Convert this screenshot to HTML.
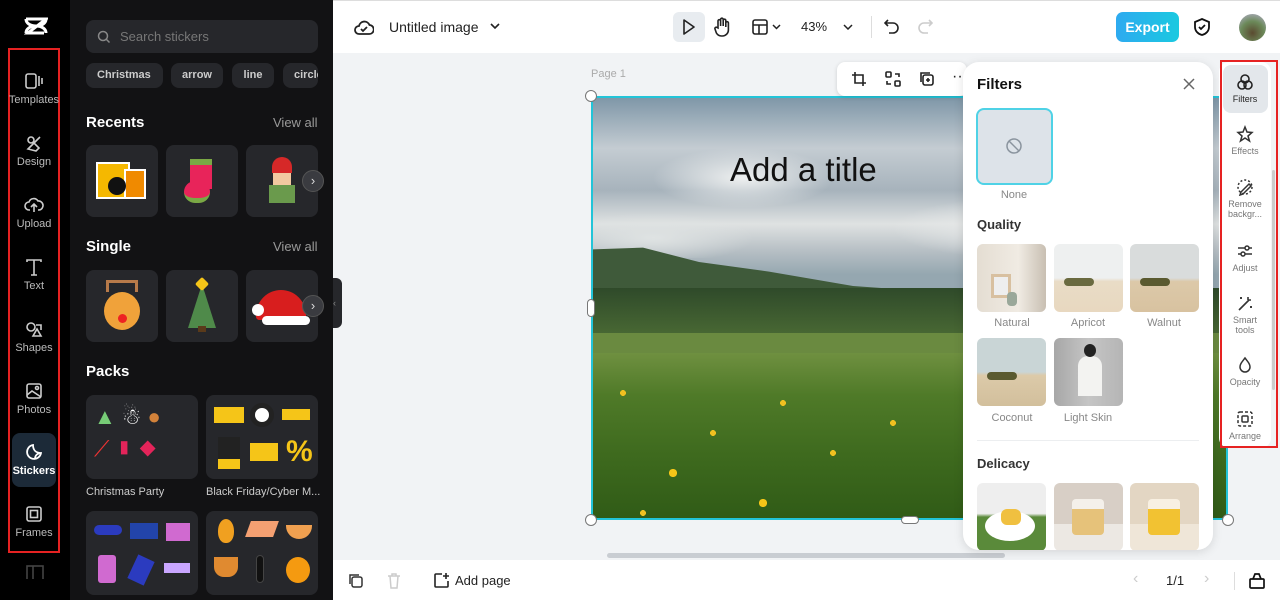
<!DOCTYPE html>
<html><head><meta charset="utf-8"><style>
*{box-sizing:border-box;margin:0;padding:0}
body{width:1280px;height:600px;overflow:hidden;position:relative;font-family:"Liberation Sans",sans-serif;background:#f1f3f5}
.a{position:absolute}
.rail{left:0;top:0;width:70px;height:600px;background:#000}
.ri{position:absolute;left:8px;width:52px;text-align:center;color:#bbb;font-size:11px}
.ri svg{display:block;margin:0 auto 3px}
.panel{left:70px;top:0;width:263px;height:600px;background:#121214}
.chip{position:absolute;top:63px;height:25px;background:#26272b;border-radius:8px;color:#ccc;font-size:11px;font-weight:bold;line-height:25px;padding:0 11px}
.h{position:absolute;left:86px;color:#fff;font-weight:bold;font-size:15px}
.va{position:absolute;right:15px;color:#999;font-size:13px}
.tile{position:absolute;width:72px;height:72px;background:#26272b;border-radius:8px}
.pk{position:absolute;background:#26272b;border-radius:8px}
.lbl{position:absolute;color:#ccc;font-size:11px}
.arrow{position:absolute;width:22px;height:22px;border-radius:50%;background:#3a3b40;border:1px solid #555;color:#ddd;font-size:13px;text-align:center;line-height:20px}
.fl{position:absolute;font-size:11px;color:#888;text-align:center;width:70px}
.th{position:absolute;width:69px;height:68px;border-radius:6px}
.rr{position:absolute;left:1222px;width:46px;text-align:center;font-size:9px;color:#777;line-height:10px}
.rr svg{display:block;margin:0 auto 3px}
</style></head><body>
<!-- rail -->
<div class="a rail">
 <svg class="a" style="left:24px;top:16px" width="24" height="20" viewBox="0 0 24 20"><path d="M2 3h20L4 17h16M2 3c0 4 4 7 10 7s10-3 10-7M2 17c0-4 4-7 10-7s10 3 10 7" stroke="#fff" stroke-width="3" fill="none"/></svg>
 <div class="a" style="left:8px;top:48px;width:52px;height:505px;border:2px solid #e62222"></div>
 <div class="ri" style="top:71px"><svg width="20" height="20" viewBox="0 0 20 20" fill="none" stroke="#ccc" stroke-width="1.6"><rect x="2" y="3" width="10" height="14" rx="2"/><path d="M15 5v10M18 7v6"/></svg>Templates</div>
 <div class="ri" style="top:133px"><svg width="20" height="20" viewBox="0 0 20 20" fill="none" stroke="#ccc" stroke-width="1.6"><circle cx="7" cy="7" r="3"/><path d="M10 10l6-6M4 16l6-6 5 5-3 3z"/></svg>Design</div>
 <div class="ri" style="top:195px"><svg width="20" height="20" viewBox="0 0 20 20" fill="none" stroke="#ccc" stroke-width="1.6"><path d="M6 15H5a4 4 0 010-8 5 5 0 019-1 4 4 0 011 9h-1M10 17V9M7 12l3-3 3 3"/></svg>Upload</div>
 <div class="ri" style="top:257px"><svg width="20" height="20" viewBox="0 0 20 20" fill="none" stroke="#ccc" stroke-width="1.6"><path d="M3 5V3h14v2M10 3v15M7 18h6"/></svg>Text</div>
 <div class="ri" style="top:319px"><svg width="20" height="20" viewBox="0 0 20 20" fill="none" stroke="#ccc" stroke-width="1.6"><circle cx="7" cy="8" r="4"/><path d="M12 6h5v5M9 17l4-7 4 7z"/></svg>Shapes</div>
 <div class="ri" style="top:381px"><svg width="20" height="20" viewBox="0 0 20 20" fill="none" stroke="#ccc" stroke-width="1.6"><rect x="3" y="3" width="14" height="14" rx="2"/><path d="M3 14l5-4 9 6"/><circle cx="13" cy="7" r="1.5"/></svg>Photos</div>
 <div class="a" style="left:12px;top:433px;width:44px;height:54px;background:#1c2a38;border-radius:8px"></div>
 <div class="ri" style="top:442px;color:#fff;font-weight:bold"><svg width="20" height="20" viewBox="0 0 20 20" fill="none" stroke="#fff" stroke-width="1.8"><path d="M17 11a7 7 0 11-8-8c0 5 3 8 8 8zM17 11c-3 0-6 2-6 6"/></svg>Stickers</div>
 <div class="ri" style="top:504px"><svg width="20" height="20" viewBox="0 0 20 20" fill="none" stroke="#ccc" stroke-width="1.6"><rect x="3" y="3" width="14" height="14" rx="2"/><rect x="6.5" y="6.5" width="7" height="7"/></svg>Frames</div>
 <svg class="a" style="left:26px;top:565px" width="18" height="14"><rect x="1" y="1" width="16" height="14" fill="none" stroke="#444" stroke-width="1.6"/><path d="M7 1v13" stroke="#444" stroke-width="1.6"/></svg>
</div>
<!-- panel -->
<div class="a panel">
 <div class="a" style="left:16px;top:20px;width:232px;height:33px;background:#26272b;border-radius:8px;color:#777;font-size:13px;line-height:33px;padding-left:34px">Search stickers
  <svg class="a" style="left:11px;top:10px" width="14" height="14" viewBox="0 0 14 14" fill="none" stroke="#888" stroke-width="1.5"><circle cx="6" cy="6" r="4.5"/><path d="M9.5 9.5l3 3"/></svg></div>
</div>
<div class="chip" style="left:86px;width:77px">Christmas</div>
<div class="chip" style="left:171px;width:52px;padding:0;text-align:center">arrow</div>
<div class="chip" style="left:232px;width:42px;padding:0;text-align:center">line</div>
<div class="chip" style="left:283px;width:35px;overflow:hidden;padding-left:11px">circle</div>
<div class="h" style="top:114px">Recents</div><div class="va" style="top:115px;left:273px">View all</div>
<div class="tile" style="left:86px;top:145px"><div class="a" style="left:10px;top:17px;width:34px;height:37px;background:#f5b800;border:2px solid #fff"></div><div class="a" style="left:38px;top:24px;width:22px;height:30px;background:#f08a00;border:2px solid #fff"></div><div class="a" style="left:22px;top:32px;width:18px;height:18px;border-radius:50%;background:#111"></div></div>
<div class="tile" style="left:166px;top:145px"><div class="a" style="left:24px;top:14px;width:22px;height:30px;background:#e8245a;border-top:6px solid #7aa845"></div><div class="a" style="left:18px;top:36px;width:26px;height:22px;border-radius:12px;background:#e8245a;border-bottom:5px solid #7aa845"></div></div>
<div class="tile" style="left:246px;top:145px"><div class="a" style="left:26px;top:12px;width:20px;height:16px;background:#d62828;border-radius:10px 10px 0 0"></div><div class="a" style="left:27px;top:28px;width:18px;height:12px;background:#f2c9a0"></div><div class="a" style="left:23px;top:40px;width:26px;height:18px;background:#6a9a4c"></div></div>
<div class="arrow" style="left:302px;top:170px">›</div>
<div class="h" style="top:238px">Single</div><div class="va" style="top:239px;left:273px">View all</div>
<div class="tile" style="left:86px;top:270px"><div class="a" style="left:18px;top:22px;width:36px;height:38px;border-radius:50%;background:#f0a23a"></div><div class="a" style="left:32px;top:44px;width:9px;height:9px;border-radius:50%;background:#e22"></div><div class="a" style="left:20px;top:10px;width:32px;height:12px;border:3px solid #b77a4a;border-bottom:none"></div></div>
<div class="tile" style="left:166px;top:270px"><div class="a" style="left:22px;top:14px;width:0;height:0;border-left:14px solid transparent;border-right:14px solid transparent;border-bottom:44px solid #4f8a4a"></div><div class="a" style="left:32px;top:56px;width:8px;height:6px;background:#5a3a1a"></div><div class="a" style="left:31px;top:9px;width:10px;height:10px;background:#f5c518;border-radius:2px;transform:rotate(45deg)"></div></div>
<div class="tile" style="left:246px;top:270px;overflow:hidden"><div class="a" style="left:10px;top:20px;width:50px;height:30px;background:#d81e1e;border-radius:30px 30px 4px 4px"></div><div class="a" style="left:16px;top:46px;width:48px;height:9px;background:#fff;border-radius:5px"></div><div class="a" style="left:6px;top:34px;width:12px;height:12px;background:#fff;border-radius:50%"></div></div>
<div class="arrow" style="left:302px;top:295px">›</div>
<div class="h" style="top:363px">Packs</div>
<div class="pk" style="left:86px;top:395px;width:112px;height:84px;font-size:22px;line-height:32px;padding:6px 8px;letter-spacing:6px"><span style="color:#7c7">▲</span><span style="color:#fff">☃</span><span style="color:#d2823a">●</span><br><span style="color:#e33">⟋</span><span style="color:#e3245a">▮</span><span style="color:#e3245a">◆</span></div>
<div class="pk" style="left:206px;top:395px;width:112px;height:84px"><div class="a" style="left:8px;top:12px;width:30px;height:16px;background:#f5c518"></div><div class="a" style="left:44px;top:8px;width:24px;height:24px;border-radius:50%;background:#fff;border:5px solid #222"></div><div class="a" style="left:76px;top:14px;width:28px;height:11px;background:#f5c518"></div><div class="a" style="left:12px;top:42px;width:22px;height:32px;background:#222;border-bottom:10px solid #f5c518"></div><div class="a" style="left:44px;top:48px;width:28px;height:18px;background:#f5c518"></div><div class="a" style="left:80px;top:40px;color:#f5c518;font-size:30px;font-weight:bold">%</div></div>
<div class="lbl" style="left:86px;top:486px">Christmas Party</div>
<div class="lbl" style="left:206px;top:486px">Black Friday/Cyber M...</div>
<div class="pk" style="left:86px;top:511px;width:112px;height:84px"><div class="a" style="left:8px;top:14px;width:28px;height:10px;background:#2b3bbf;border-radius:5px"></div><div class="a" style="left:44px;top:12px;width:28px;height:16px;background:#2244aa"></div><div class="a" style="left:80px;top:12px;width:24px;height:18px;background:#d06ad0"></div><div class="a" style="left:12px;top:44px;width:18px;height:28px;background:#d06ad0;border-radius:3px"></div><div class="a" style="left:46px;top:46px;width:18px;height:26px;background:#2b3bbf;transform:rotate(25deg)"></div><div class="a" style="left:78px;top:52px;width:26px;height:10px;background:#c9a6ff"></div></div>
<div class="pk" style="left:206px;top:511px;width:112px;height:84px"><div class="a" style="left:12px;top:8px;width:16px;height:24px;background:#f0a020;border-radius:50% 50% 45% 45%"></div><div class="a" style="left:42px;top:10px;width:28px;height:16px;background:#f4a072;transform:skewX(-20deg)"></div><div class="a" style="left:80px;top:14px;width:26px;height:14px;background:#f0a050;border-radius:0 0 14px 14px"></div><div class="a" style="left:8px;top:46px;width:24px;height:20px;background:#e08a30;border-radius:0 0 10px 10px"></div><div class="a" style="left:50px;top:44px;width:8px;height:28px;background:#111;border:1px solid #444;border-radius:4px"></div><div class="a" style="left:80px;top:46px;width:24px;height:26px;background:#f59a10;border-radius:50%"></div></div>
<div class="a" style="left:333px;top:278px;width:9px;height:50px;background:#26272b;border-radius:0 6px 6px 0;color:#888;font-size:9px;line-height:50px">‹</div>

<!-- top bar -->
<div class="a" style="left:333px;top:0;width:947px;height:53px;background:#fff;border-top:1px solid #ddd"></div>
<svg class="a" style="left:354px;top:18px" width="20" height="18" viewBox="0 0 20 18" fill="none" stroke="#222" stroke-width="1.8"><path d="M5 16a4 4 0 010-8 5.5 5.5 0 0110.5-1A4.5 4.5 0 0115 16z"/><path d="M7 11l2 2 4-4"/></svg>
<div class="a" style="left:389px;top:19px;font-size:14px;color:#222">Untitled image</div>
<svg class="a" style="left:490px;top:23px" width="10" height="7"><path d="M1 1l4 4 4-4" stroke="#222" stroke-width="1.6" fill="none"/></svg>
<div class="a" style="left:673px;top:12px;width:32px;height:30px;background:#e8ecf0;border-radius:6px"></div>
<svg class="a" style="left:682px;top:19px" width="14" height="16"><path d="M2 1l10 7-10 7z" stroke="#222" stroke-width="1.6" fill="none" stroke-linejoin="round"/></svg>
<svg class="a" style="left:713px;top:17px" width="18" height="20" viewBox="0 0 18 20" fill="none" stroke="#222" stroke-width="1.6"><path d="M5 11V4a1.3 1.3 0 012.6 0v5V2.5a1.3 1.3 0 012.6 0V9V3.5a1.3 1.3 0 012.6 0V10V6a1.3 1.3 0 012.6 0v7a6 6 0 01-6 6h-1a6 6 0 01-5-3L2 12a1.3 1.3 0 012-1.5z"/></svg>
<svg class="a" style="left:752px;top:19px" width="16" height="16"><rect x="1" y="1" width="14" height="14" rx="2" stroke="#222" stroke-width="1.6" fill="none"/><path d="M1 6h14M7 6v9" stroke="#222" stroke-width="1.6"/></svg>
<svg class="a" style="left:772px;top:24px" width="9" height="6"><path d="M1 1l3.5 3.5L8 1" stroke="#222" stroke-width="1.5" fill="none"/></svg>
<div class="a" style="left:801px;top:19px;font-size:13px;color:#222">43%</div>
<svg class="a" style="left:843px;top:24px" width="10" height="6"><path d="M1 1l4 4 4-4" stroke="#222" stroke-width="1.5" fill="none"/></svg>
<div class="a" style="left:871px;top:16px;width:1px;height:22px;background:#ddd"></div>
<svg class="a" style="left:884px;top:18px" width="16" height="17"><path d="M4 2L1 5l3 3M1 5h8a5 5 0 010 10H5" stroke="#222" stroke-width="1.6" fill="none"/></svg>
<svg class="a" style="left:917px;top:18px" width="16" height="17"><path d="M12 2l3 3-3 3M15 5H7a5 5 0 000 10h4" stroke="#ccc" stroke-width="1.6" fill="none"/></svg>
<div class="a" style="left:1116px;top:12px;width:63px;height:30px;border-radius:7px;background:linear-gradient(90deg,#2eaaf0,#1ac9e0);color:#fff;font-weight:bold;font-size:14px;text-align:center;line-height:30px">Export</div>
<svg class="a" style="left:1193px;top:17px" width="18" height="20" viewBox="0 0 18 20" fill="none" stroke="#111" stroke-width="1.8"><path d="M9 2l7 3v5c0 4-3 7-7 8-4-1-7-4-7-8V5z"/><path d="M6 10l2 2 4-4"/></svg>
<div class="a" style="left:1239px;top:14px;width:27px;height:27px;border-radius:50%;background:radial-gradient(circle at 50% 70%,#5a4a30,#6c8a5a 50%,#aab 90%)"></div>

<!-- canvas -->
<div class="a" style="left:591px;top:68px;font-size:11px;color:#aaa">Page 1</div>
<div class="a" style="left:591px;top:96px;width:637px;height:424px;border:2px solid #22c4d8;overflow:hidden;background:linear-gradient(180deg,#7f97a8 0%,#c4ccd2 12%,#a7b3bc 22%,#dfe2e2 30%,#b9c1c6 36%,#95a7b0 42%)">
 <div class="a" style="left:0;top:40px;width:640px;height:120px;background:radial-gradient(ellipse 90px 30px at 150px 40px,#eef0f0,transparent),radial-gradient(ellipse 120px 30px at 420px 90px,#e8eaea,transparent),radial-gradient(ellipse 100px 25px at 60px 100px,#dfe3e3,transparent)"></div>
 <div class="a" style="left:-20px;top:140px;width:700px;height:120px;background:#3f5a3a;clip-path:polygon(0 10%,10% 8%,18% 20%,28% 28%,40% 40%,52% 45%,62% 50%,72% 55%,85% 57%,100% 55%,100% 100%,0 100%)"></div>
 <div class="a" style="left:0;top:190px;width:640px;height:50px;background:linear-gradient(180deg,#2f4a2a,#4a6a34)"></div>
 <div class="a" style="left:0;top:235px;width:640px;height:30px;background:#6a8a40"></div>
 <div class="a" style="left:0;top:255px;width:640px;height:170px;background:linear-gradient(180deg,#6f9040 0%,#4f7a28 25%,#3e6a1e 60%,#2f5a16 100%)"></div>
 <div class="a" style="left:0;top:265px;width:640px;height:160px;background:radial-gradient(circle 3px at 30px 30px,#f0c020 99%,transparent),radial-gradient(circle 3px at 120px 70px,#f0c020 99%,transparent),radial-gradient(circle 4px at 80px 110px,#f5c518 99%,transparent),radial-gradient(circle 3px at 190px 40px,#f0c020 99%,transparent),radial-gradient(circle 3px at 240px 90px,#f0c020 99%,transparent),radial-gradient(circle 4px at 170px 140px,#f5c518 99%,transparent),radial-gradient(circle 3px at 300px 60px,#f0c020 99%,transparent),radial-gradient(circle 3px at 50px 150px,#f0c020 99%,transparent)"></div>
 <div class="a" style="left:137px;top:53px;font-size:33px;color:#111">Add a title</div>
</div>
<div class="a" style="left:585px;top:90px;width:12px;height:12px;border-radius:50%;background:#fff;border:1px solid #777"></div>
<div class="a" style="left:585px;top:514px;width:12px;height:12px;border-radius:50%;background:#fff;border:1px solid #777"></div>
<div class="a" style="left:1222px;top:514px;width:12px;height:12px;border-radius:50%;background:#fff;border:1px solid #777"></div>
<div class="a" style="left:587px;top:299px;width:8px;height:18px;border-radius:4px;background:#fff;border:1px solid #777"></div>
<div class="a" style="left:901px;top:516px;width:18px;height:8px;border-radius:4px;background:#fff;border:1px solid #777"></div>
<div class="a" style="left:837px;top:62px;width:130px;height:34px;background:#fff;border-radius:8px;box-shadow:0 1px 4px rgba(0,0,0,.15)"></div>
<svg class="a" style="left:851px;top:71px" width="16" height="16" fill="none" stroke="#222" stroke-width="1.6"><path d="M4 1v11h11M1 4h11v11"/></svg>
<svg class="a" style="left:885px;top:71px" width="16" height="16" fill="none" stroke="#222" stroke-width="1.6"><rect x="1" y="1" width="5" height="5" rx="1"/><rect x="10" y="10" width="5" height="5" rx="1"/><path d="M10 3h4v3M6 13H2v-3"/></svg>
<svg class="a" style="left:919px;top:71px" width="16" height="16" fill="none" stroke="#222" stroke-width="1.6"><rect x="4" y="4" width="10" height="10" rx="2"/><path d="M2 11V2h9M9 7v4M7 9h4"/></svg>
<div class="a" style="left:952px;top:68px;font-size:16px;color:#222">··</div>
<div class="a" style="left:607px;top:553px;width:398px;height:5px;border-radius:3px;background:#c9cdd2"></div>

<!-- filters panel -->
<div class="a" style="left:963px;top:62px;width:250px;height:488px;background:#fff;border-radius:16px;box-shadow:0 2px 10px rgba(0,0,0,.12);overflow:hidden">
 <div class="a" style="left:14px;top:14px;font-size:15px;font-weight:bold;color:#111">Filters</div>
 <svg class="a" style="left:220px;top:16px" width="12" height="12"><path d="M1 1l10 10M11 1L1 11" stroke="#666" stroke-width="1.5"/></svg>
 <div class="a" style="left:13px;top:46px;width:77px;height:77px;border:2px solid #4fd2e6;border-radius:8px;background:#dde3e9"></div>
 <svg class="a" style="left:42px;top:75px" width="18" height="18" fill="none" stroke="#8a949e" stroke-width="1.5"><circle cx="9" cy="9" r="7"/><path d="M4 4l10 10"/></svg>
 <div class="fl" style="left:16px;top:127px">None</div>
 <div class="a" style="left:14px;top:155px;font-size:13px;font-weight:bold;color:#333">Quality</div>
 <div class="th" style="left:14px;top:182px;background:linear-gradient(90deg,#e4ddd2,#f0ebe3 60%,#c8bfb2);"><div class="a" style="left:14px;top:30px;width:20px;height:24px;border:3px solid #d8c0a0;background:#eee"></div><div class="a" style="left:30px;top:48px;width:10px;height:14px;background:#9aa89a;border-radius:4px"></div></div>
 <div class="th" style="left:91px;top:182px;background:linear-gradient(180deg,#eef0f0 50%,#e9dcc6 55%,#e8d8c0)"><div class="a" style="left:10px;top:34px;width:30px;height:8px;background:#6a6a40;border-radius:4px"></div></div>
 <div class="th" style="left:167px;top:182px;background:linear-gradient(180deg,#d9dcdc 50%,#dcc9a9 55%,#d8c2a0)"><div class="a" style="left:10px;top:34px;width:30px;height:8px;background:#5a5a30;border-radius:4px"></div></div>
 <div class="fl" style="left:14px;top:255px">Natural</div><div class="fl" style="left:90px;top:255px">Apricot</div><div class="fl" style="left:166px;top:255px">Walnut</div>
 <div class="th" style="left:14px;top:276px;background:linear-gradient(180deg,#c9d5d6 50%,#dccaa9 55%,#d2bf9c)"><div class="a" style="left:10px;top:34px;width:30px;height:8px;background:#5a5a30;border-radius:4px"></div></div>
 <div class="th" style="left:91px;top:276px;background:linear-gradient(90deg,#a7a7a7,#c5c5c5 50%,#b5b5b5)"><div class="a" style="left:24px;top:18px;width:24px;height:40px;background:#f3f3f1;border-radius:10px 10px 0 0"></div><div class="a" style="left:30px;top:6px;width:12px;height:13px;background:#222;border-radius:50%"></div></div>
 <div class="fl" style="left:14px;top:350px">Coconut</div><div class="fl" style="left:90px;top:350px">Light Skin</div>
 <div class="a" style="left:14px;top:378px;width:222px;height:1px;background:#eceef0"></div>
 <div class="a" style="left:14px;top:394px;font-size:13px;font-weight:bold;color:#333">Delicacy</div>
 <div class="th" style="left:14px;top:421px;background:linear-gradient(180deg,#eee 45%,#5a8a3a 50%)"><div class="a" style="left:8px;top:28px;width:50px;height:30px;border-radius:50%;background:#fff"></div><div class="a" style="left:24px;top:26px;width:20px;height:16px;border-radius:6px;background:#f0c040"></div></div>
 <div class="th" style="left:91px;top:421px;background:linear-gradient(180deg,#d8cfc6 60%,#ece8e3 60%)"><div class="a" style="left:18px;top:16px;width:32px;height:36px;background:#e6c27a;border-top:10px solid #f4f0ea;border-radius:4px"></div></div>
 <div class="th" style="left:167px;top:421px;background:linear-gradient(180deg,#e3d6c3 60%,#efe6d8 60%)"><div class="a" style="left:18px;top:16px;width:32px;height:36px;background:#f2c232;border-top:10px solid #f8f0e2;border-radius:4px"></div></div>
</div>

<!-- right rail -->
<div class="a" style="left:1219px;top:62px;width:52px;height:386px;background:#fff;border-radius:10px"></div>
<div class="a" style="left:1272px;top:170px;width:3px;height:220px;background:#ccc;border-radius:2px"></div>
<div class="a" style="left:1220px;top:60px;width:58px;height:388px;border:2px solid #e62222"></div>
<div class="a" style="left:1223px;top:65px;width:45px;height:48px;background:#e3e7eb;border-radius:8px"></div>
<div class="rr" style="top:73px;color:#222"><svg width="18" height="18" fill="none" stroke="#222" stroke-width="1.6"><circle cx="9" cy="6" r="4"/><circle cx="6" cy="12" r="4"/><circle cx="12" cy="12" r="4"/></svg>Filters</div>
<div class="rr" style="top:125px"><svg width="18" height="18" fill="none" stroke="#333" stroke-width="1.5"><path d="M9 2l2 5 5 .5-4 3.5 1.5 5L9 13l-4.5 3L6 11 2 7.5 7 7z"/></svg>Effects</div>
<div class="rr" style="top:178px"><svg width="18" height="18" fill="none" stroke="#333" stroke-width="1.5"><path d="M5 14l8-8 2 2-8 8-3 1z"/><circle cx="9" cy="9" r="7" stroke-dasharray="2 2"/></svg>Remove<br>backgr...</div>
<div class="rr" style="top:242px"><svg width="18" height="18" fill="none" stroke="#333" stroke-width="1.5"><path d="M2 6h14M2 12h14"/><circle cx="11" cy="6" r="2" fill="#fff"/><circle cx="7" cy="12" r="2" fill="#fff"/></svg>Adjust</div>
<div class="rr" style="top:294px"><svg width="18" height="18" fill="none" stroke="#333" stroke-width="1.6"><path d="M3 16l10-10M12 3v3M15 6h-3M5 3v2M4 4h2M15 12v2M14 13h2"/></svg>Smart<br>tools</div>
<div class="rr" style="top:356px"><svg width="18" height="18" fill="none" stroke="#333" stroke-width="1.5"><path d="M9 2c3 4 5 6 5 9a5 5 0 01-10 0c0-3 2-5 5-9z"/></svg>Opacity</div>
<div class="rr" style="top:410px"><svg width="18" height="18" fill="none" stroke="#333" stroke-width="1.5"><rect x="2" y="2" width="14" height="14" rx="2" stroke-dasharray="3 2"/><rect x="6" y="6" width="6" height="6" rx="1"/></svg>Arrange</div>

<!-- bottom bar -->
<div class="a" style="left:333px;top:560px;width:947px;height:40px;background:#fff"></div>
<svg class="a" style="left:348px;top:573px" width="16" height="16" fill="none" stroke="#333" stroke-width="1.5"><rect x="4" y="4" width="10" height="10" rx="2"/><path d="M2 11V2h9"/></svg>
<svg class="a" style="left:387px;top:573px" width="14" height="16" fill="none" stroke="#ccc" stroke-width="1.5"><path d="M1 3h12M5 3V1h4v2M3 3l1 12h6l1-12"/></svg>
<svg class="a" style="left:433px;top:572px" width="17" height="17" fill="none" stroke="#222" stroke-width="1.6"><path d="M9 2H3a1 1 0 00-1 1v11a1 1 0 001 1h11a1 1 0 001-1V9M13 1v6M10 4h6"/></svg>
<div class="a" style="left:455px;top:573px;font-size:13px;color:#222">Add page</div>
<div class="a" style="left:1133px;top:570px;font-size:16px;color:#ccc">‹</div>
<div class="a" style="left:1166px;top:573px;font-size:13px;color:#222">1/1</div>
<div class="a" style="left:1204px;top:570px;font-size:16px;color:#ccc">›</div>
<div class="a" style="left:1234px;top:572px;width:1px;height:18px;background:#ddd"></div>
<svg class="a" style="left:1248px;top:572px" width="18" height="17" fill="none" stroke="#111" stroke-width="1.7"><rect x="2" y="7" width="14" height="9" rx="1"/><path d="M5 7l2-5h4l2 5"/></svg>
</body></html>
